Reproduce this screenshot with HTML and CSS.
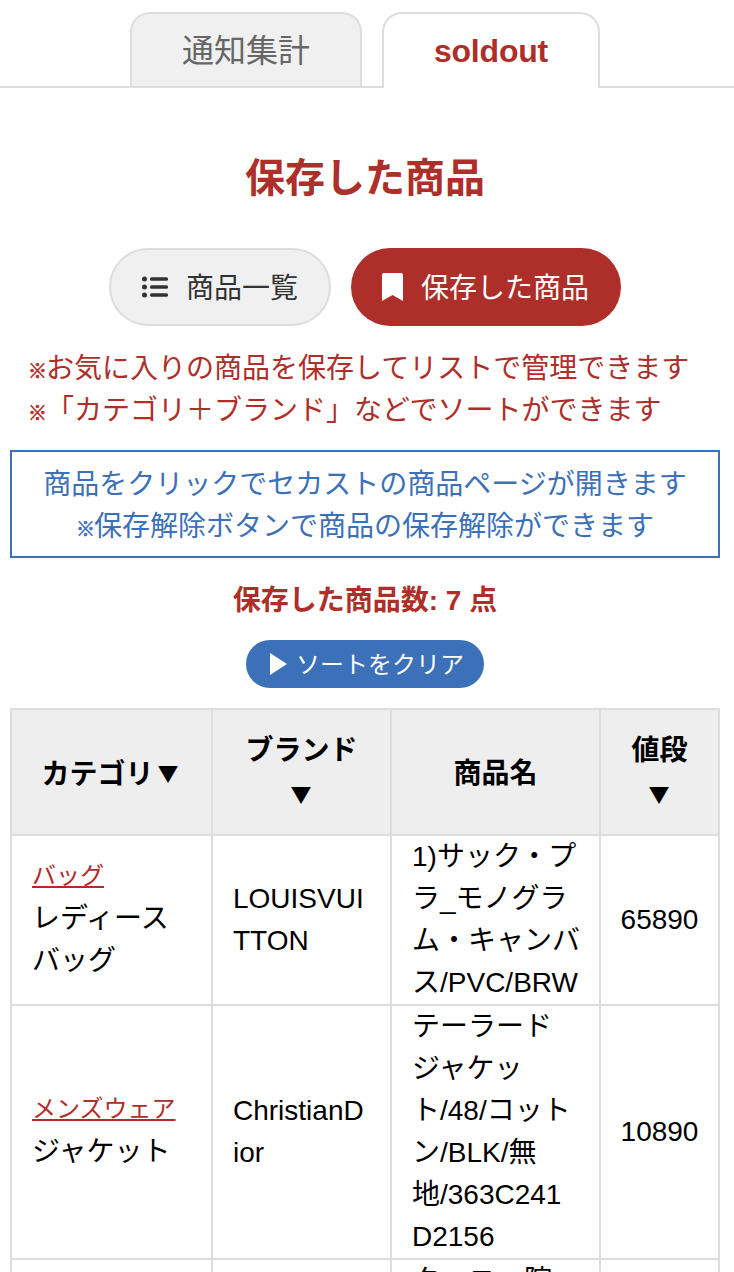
FILE: index.html
```html
<!DOCTYPE html>
<html lang="ja">
<head>
    <meta charset="UTF-8">
    <meta name="viewport" content="width=device-width, initial-scale=1.0">
    <title>保存した商品</title>
    <link rel="stylesheet" href="styles.css">
</head>
<body>
    <nav class="tabs">
        <a class="tab">通知集計</a>
        <a class="tab active">soldout</a>
    </nav>
    <main>
        <h1>保存した商品</h1>
        <div class="views">
            <a class="view">
                <svg class="icon-list" viewBox="0 0 26 22"><circle cx="2.500" cy="3" r="2.500"/><circle cx="2.500" cy="11" r="2.500"/><circle cx="2.500" cy="19" r="2.500"/><rect x="8" y="1.200" width="18" height="3.600" rx="1.500"/><rect x="8" y="9.200" width="18" height="3.600" rx="1.500"/><rect x="8" y="17.200" width="18" height="3.600" rx="1.500"/></svg>
                <span class="label">商品一覧</span>
            </a>
            <a class="view current">
                <svg class="icon-mark" viewBox="0 0 21 28"><path d="M2 0h17a2 2 0 0 1 2 2v26l-10.500-6L0 28V2a2 2 0 0 1 2-2z"/></svg>
                <span class="label">保存した商品</span>
            </a>
        </div>
        <div class="notes">
            <p><span class="mark">※</span>お気に入りの商品を保存してリストで管理できます</p>
            <p><span class="mark">※</span>「カテゴリ＋ブランド」などでソートができます</p>
        </div>
        <div class="info">
            <p>商品をクリックでセカストの商品ページが開きます</p>
            <p><span class="mark">※</span>保存解除ボタンで商品の保存解除ができます</p>
        </div>
        <p class="count">保存した商品数: 7 点</p>
        <div class="clear-row">
            <a class="clear"><span class="play"></span><span class="clear-label">ソートをクリア</span></a>
        </div>
        <table>
            <colgroup>
                <col class="col-cat">
                <col class="col-brand">
                <col class="col-name">
                <col class="col-price">
            </colgroup>
            <thead>
                <tr>
                    <th>カテゴリ<span class="arrow">▼</span></th>
                    <th>ブランド<span class="arrow">▼</span></th>
                    <th>商品名</th>
                    <th>値段<span class="arrow">▼</span></th>
                </tr>
            </thead>
            <tbody>
                <tr>
                    <td class="cat-cell"><a class="cat">バッグ</a><br>レディース<br>バッグ</td>
                    <td class="lines">LOUISVUI<br>TTON</td>
                    <td class="lines">1)サック・プ<br>ラ_モノグラ<br>ム・キャンバ<br>ス/PVC/BRW</td>
                    <td>65890</td>
                </tr>
                <tr>
                    <td class="cat-cell"><a class="cat">メンズウェア</a><br>ジャケット</td>
                    <td class="lines">ChristianD<br>ior</td>
                    <td class="lines">テーラード<br>ジャケッ<br>ト/48/コット<br>ン/BLK/無<br>地/363C241<br>D2156</td>
                    <td>10890</td>
                </tr>
                <tr>
                    <td class="cat-cell"><a class="cat">バッグ</a><br>ショルダー<br>バッグ</td>
                    <td class="lines">CHANEL</td>
                    <td class="lines">ターニッ院<br>キャビアス<br>キン/BLK/無<br>地/A01112</td>
                    <td>32890</td>
                </tr>
            </tbody>
        </table>
    </main>
</body>
</html>
```

FILE: styles.css
```css
html, body {
    height: 100%;
    overflow: hidden;
}
body {
    margin: 0;
    background: #fff;
    color: #000;
    font-family: "Liberation Sans", "Noto Sans CJK JP", sans-serif;
    font-size: 28px;
    line-height: 42px;
}
p {
    margin: 0;
}
.tabs {
    display: flex;
    justify-content: center;
    gap: 20px;
    height: 74px;
    padding: 12px 4px 0 0;
    border-bottom: 2px solid #ddd;
}
.tab {
    box-sizing: border-box;
    width: 232px;
    height: 74px;
    border: 2px solid #ddd;
    border-bottom: none;
    border-radius: 20px 20px 0 0;
    background: #f0f0f0;
    color: #666;
    font-size: 32px;
    line-height: 74px;
    text-align: center;
}
.tab.active {
    width: 218px;
    height: 76px;
    background: #fff;
    color: #ae2e29;
    font-weight: bold;
    letter-spacing: -0.2px;
}
main {
    width: 710px;
    padding: 0 10px;
}
h1 {
    margin: 64px 0 44px;
    color: #ae2e29;
    font-size: 40px;
    line-height: 52px;
    text-align: center;
}
.views {
    display: flex;
    justify-content: center;
    gap: 20px;
}
.view {
    display: flex;
    align-items: center;
    box-sizing: border-box;
    width: 222px;
    height: 78px;
    padding-left: 31px;
    border: 2px solid #ddd;
    border-radius: 39px;
    background: #f0f0f0;
    color: #333;
    white-space: nowrap;
}
.view.current {
    width: 270px;
    border: none;
    background: #ae2e29;
    color: #fff;
}
.label {
    padding-top: 4px;
}
.icon-list {
    width: 26px;
    height: 22px;
    margin-right: 18px;
    fill: #333;
}
.icon-mark {
    width: 21px;
    height: 28px;
    margin-right: 18px;
    fill: #fff;
}
.notes {
    margin-top: 22px;
    padding-left: 18px;
    color: #ae2e29;
}
.mark {
    display: inline-block;
    font-size: 18px;
    font-weight: bold;
    line-height: 1;
    -webkit-text-stroke: 0.6px currentColor;
    transform: scale(1.05);
    transform-origin: left center;
}
.info {
    box-sizing: border-box;
    height: 108px;
    margin-top: 18px;
    padding: 12px 0 8px;
    border: 2px solid #3c70b8;
    color: #3c70b8;
    text-align: center;
}
.count {
    margin-top: 22px;
    color: #ae2e29;
    font-weight: bold;
    text-align: center;
}
.clear-row {
    display: flex;
    justify-content: center;
    margin-top: 18px;
}
.clear {
    display: flex;
    align-items: center;
    height: 48px;
    padding: 0 20px 0 24px;
    border-radius: 24px;
    background: #3c70b8;
    color: #fff;
    font-size: 24px;
}
.clear-label {
    padding-top: 2px;
}
.play {
    width: 0;
    height: 0;
    margin-right: 9px;
    border-left: 17px solid #fff;
    border-top: 11px solid transparent;
    border-bottom: 11px solid transparent;
}
table {
    width: 710px;
    margin-top: 20px;
    border-collapse: collapse;
    table-layout: fixed;
}
.col-cat { width: 201px; }
.col-brand { width: 179px; }
.col-name { width: 209px; }
.col-price { width: 119px; }
th, td {
    padding: 0 20px;
    border: 2px solid #ddd;
}
th {
    height: 121px;
    padding-top: 3px;
    background: #eee;
    text-align: center;
}
.arrow {
    display: inline-block;
    font-family: "Noto Sans CJK JP", sans-serif;
    font-weight: normal;
    transform: scale(0.75);
}
td:last-child {
    padding: 0;
    text-align: center;
}
.lines {
    white-space: nowrap;
}
td.cat-cell {
    padding-bottom: 2px;
}
.cat {
    color: #ae2e29;
    font-size: 24px;
    line-height: 1;
    text-decoration: underline;
    vertical-align: 2px;
}
```
